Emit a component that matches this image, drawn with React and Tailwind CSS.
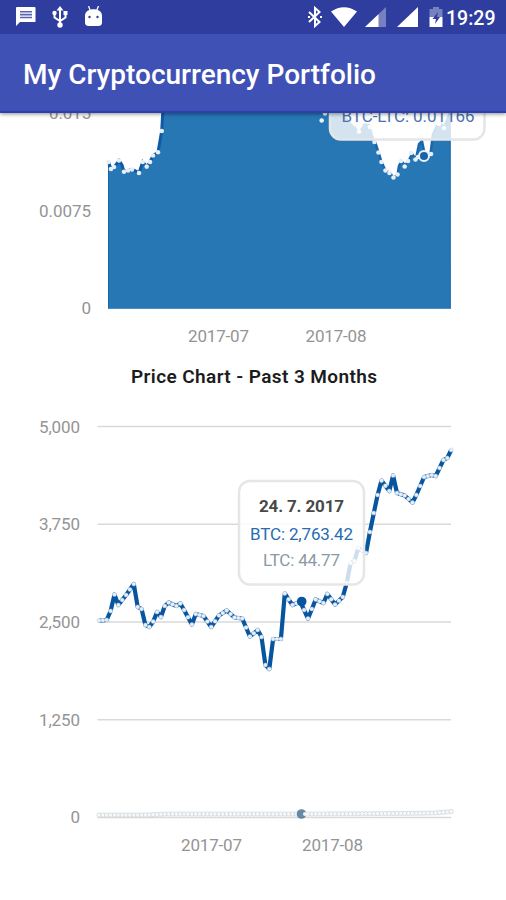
import React from "react";

const DAY = 3.87;
const START = 99;

// Known turning points of the BTC price, in chart units.
const BTC = [
  [99, 620.5], [105, 620], [109, 611], [113.3, 594.5], [118.3, 605], [125.7, 595], [132, 584], [136.7, 607], [141, 609],
  [145, 625], [148.5, 627], [153, 621.5], [156.7, 612], [162.5, 617], [166, 606], [170, 602.5], [174.5, 606], [178.7, 603.5],
  [184, 610], [191, 624.5], [197.5, 614], [202.7, 616], [209.5, 627], [217.5, 615.5], [226.7, 610.5], [234, 617.5], [242, 618.5],
  [248.3, 636.5], [256, 630], [261, 637], [266, 665], [269.3, 669], [275, 639], [282, 639], [286, 593.5], [290.7, 605],
  [294, 595], [301.7, 601.5], [308, 618.5], [316.7, 599.5], [323.5, 603], [328.7, 594], [336, 604.5], [342.5, 597],
  [346.5, 583], [349.5, 563], [353, 561], [358.3, 548], [366.7, 553], [371, 532], [375, 513], [379, 495], [383.3, 480.6],
  [387.7, 491], [392.7, 475.5], [398.3, 493], [404, 495.5], [410.7, 502.5], [418, 495], [424.5, 477], [430, 475], [436.7, 476],
  [442.3, 460], [446, 458], [450, 450],
];

function sample(points, x) {
  for (let i = 1; i < points.length; i++) {
    const [x0, y0] = points[i - 1];
    const [x1, y1] = points[i];
    if (x <= x1) return y0 + ((y1 - y0) * (x - x0)) / (x1 - x0);
  }
  return points[points.length - 1][1];
}

// One marker a day; turning points are snapped to the closest day.
const SNAPPED = BTC.map(([x, y]) => [START + Math.round((x - START) / DAY) * DAY, y]).filter(
  ([x], i, all) => i === 0 || x > all[i - 1][0] + 1
);
const PRICE = Array.from({ length: 92 }, (_, i) => [START + i * DAY, sample(SNAPPED, START + i * DAY)]);

const LTC = Array.from({ length: 92 }, (_, i) => {
  const x = START + i * DAY;
  return [x, sample([[99, 815], [145, 815], [165, 814], [300, 814], [400, 813.5], [435, 813], [452, 811.5]], x)];
});

const LEFT = [
  [108.5, 162], [111, 169], [114, 167], [117, 163.5], [119, 160.5], [122, 165], [124, 171.7], [128, 170.5], [132, 169.5],
  [135, 170.5], [139, 173], [142.7, 162], [146.7, 166.6], [150, 162], [153, 155.5], [158, 152.3], [161.7, 131], [163, 108],
];
const RIGHT = [
  [317, 108], [343, 112], [351, 123], [355, 126], [359, 131], [364, 123], [370, 124], [374.5, 140], [378.5, 152.5], [381.5, 162],
  [385.5, 170.5], [390, 173], [393.5, 177.5], [397.5, 175], [399, 166], [401.5, 161], [405, 165.5], [408.5, 161], [412, 154],
  [416, 159], [419, 144], [422, 141], [425, 156], [428, 155], [430.5, 154], [433, 134], [437, 126], [441, 124], [444, 127.5], [447, 121], [450, 112],
];
const LEFT_DOTS = [0, 1, 2, 4, 6, 7, 8, 10, 11, 12, 13, 14, 15, 16].map((i) => LEFT[i]);
const RIGHT_DOTS = [
  [321.7, 120.5], [325, 113.5], [355, 124], [359, 131.5], [370, 127], [374.5, 142], [378.5, 152.5], [381.5, 162], [385.5, 170.5],
  [389.5, 173], [393.5, 177.5], [397.5, 174.5], [401, 161], [404.7, 166.5], [408, 161], [411, 153], [415.5, 159.5],
  [418, 157], [431, 154], [439, 124], [444, 128],
];

const toPoints = (list) => list.map(([x, y]) => `${x.toFixed(1)},${y.toFixed(1)}`).join(" ");

function Label({ x, y, w, anchor = "end", className = "fill-[#949494]", children }) {
  return (
    <text x={x} y={y} textAnchor={anchor} textLength={w} className={`text-[17px] ${className}`}>
      {children}
    </text>
  );
}

function StatusBar() {
  return (
    <div className="flex h-[34px] items-center bg-[#2f3e9e] pl-4 pr-[10px] text-white">
      <svg className="h-5 w-5" viewBox="0 0 20 20" fill="currentColor">
        <path d="M1 0h17.500a1 1 0 0 1 1 1v14H4L0 19V1a1 1 0 0 1 1-1Z" />
        <path d="M4 4.700h12M4 7.600h12M4 10.500h12" stroke="#5965b2" strokeWidth="1.600" />
      </svg>
      <svg className="ml-[15px] h-[22px] w-[18px]" viewBox="0 0 18 22" fill="none" stroke="currentColor" strokeWidth="2">
        <path d="M9 19V3M3.500 8v3.500L9 15l5.500-3.500V8" />
        <path d="M9 0l3.500 4.500h-7zM12.500 5h4v4h-4z" fill="currentColor" stroke="none" />
        <circle cx="3.500" cy="7" r="2.200" fill="currentColor" stroke="none" />
        <circle cx="9" cy="19" r="2.700" fill="currentColor" stroke="none" />
      </svg>
      <svg className="ml-[15px] h-[22px] w-[19px]" viewBox="0 0 19 22" fill="currentColor">
        <path d="M4.500 0l2 5M14.500 0l-2 5" stroke="currentColor" strokeWidth="1.300" />
        <path d="M1 9.500c0-8.500 17-8.500 17 0v7q0 3.500-4 3.500H5q-4 0-4-3.500Z" />
        <circle cx="5.500" cy="11" r="1.200" fill="#2f3e9e" />
        <circle cx="13.500" cy="11" r="1.200" fill="#2f3e9e" />
      </svg>
      <div className="ml-auto flex items-center">
        <svg className="h-[22px] w-4" viewBox="0 0 16 22" fill="none" stroke="currentColor" strokeWidth="2">
          <path d="M2 6l10.500 10L8 20V2l4.500 4L2 16" />
          <path d="M1 11h2M13 11h2" />
        </svg>
        <svg className="ml-2 h-5 w-[26px]" viewBox="0 0 26 20" fill="currentColor">
          <path d="M0 4.500Q13-4 26 4.500L13 20Z" />
        </svg>
        <svg className="ml-2 h-5 w-[21px]" viewBox="0 0 21 20" fill="currentColor">
          <path d="M0 20L21 0v20Z" opacity=".35" />
          <path d="M0 20L13.500 7.200V20Z" />
        </svg>
        <svg className="ml-[11px] h-5 w-[21px]" viewBox="0 0 21 20" fill="currentColor">
          <path d="M0 20L21 0v20Z" />
        </svg>
        <svg className="ml-[11px] h-5 w-[14px]" viewBox="0 0 14 20" fill="currentColor">
          <path d="M4 0h6v2h3.500v8H.5V2H4z" opacity=".35" />
          <path d="M.5 10h13v10H.5z" />
          <path d="M9 5L3.500 12H7l-1 5 5-7H8z" fill="#2f3e9e" />
        </svg>
        <span className="ml-[3px] mt-[3px] w-[50px] whitespace-nowrap text-[19.500px] font-medium leading-none">19:29</span>
      </div>
    </div>
  );
}

function ShareChart() {
  const area = `${toPoints([[108.5, 308.5], ...LEFT])} ${toPoints([...RIGHT, [450.5, 308.5]])}`;
  return (
    <svg className="block" width="506" height="247" viewBox="0 113 506 247">
      <Label x={91} y={119} w={42}>0.015</Label>
      <Label x={91} y={217} w={52}>0.0075</Label>
      <Label x={91} y={314}>0</Label>
      <polygon points={area} fill="#2777b5" />
      <path d="M108.500 163V308.500M450.300 113V308.500" stroke="#1767ad" strokeWidth="1" />
      <path d="M108 308.500H451" stroke="#4c8fc4" strokeWidth="1" />
      <polyline points={toPoints(LEFT)} fill="none" stroke="#0e5aa5" strokeWidth="3" />
      <polyline points={toPoints(RIGHT.slice(7))} fill="none" stroke="#1b67ab" strokeWidth="2.500" />
      {[...LEFT_DOTS, ...RIGHT_DOTS].map(([x, y], i) => (
        <circle key={i} cx={x} cy={y} r="2.300" fill="#e4eff8" />
      ))}
      <circle cx="424" cy="156" r="5" fill="#1a63a9" stroke="#eaf3fa" strokeWidth="2" />
      <rect x="330" y="80" width="154.500" height="59.500" rx="11" fill="#fff" fillOpacity=".8" stroke="#e4e5e7" strokeWidth="2.500" />
      <Label x={408} y={121.500} w={133} anchor="middle" className="fill-[#4a74ad]">BTC-LTC: 0.01166</Label>
      <Label x={218.500} y={342} w={61} anchor="middle">2017-07</Label>
      <Label x={336} y={342} w={61} anchor="middle">2017-08</Label>
    </svg>
  );
}

function PriceChart() {
  return (
    <svg className="block" width="506" height="508" viewBox="0 392 506 508">
      <path d="M97.500 426.500H451M97.500 524.200H451M97.500 622H451M97.500 719.800H451M97.500 817.500H451" stroke="#d9d9d9" strokeWidth="1.500" />
      <Label x={80} y={433} w={41}>5,000</Label>
      <Label x={80} y={530} w={41}>3,750</Label>
      <Label x={80} y={628} w={41}>2,500</Label>
      <Label x={80} y={726} w={41}>1,250</Label>
      <Label x={80} y={823}>0</Label>
      <polyline points={toPoints(PRICE)} fill="none" stroke="#07549f" strokeWidth="4.200" strokeLinejoin="round" />
      {PRICE.map(([x, y], i) => (
        <circle key={i} cx={x} cy={y} r="2.100" fill="#e6eff8" stroke="#a9c4e1" strokeWidth=".4" />
      ))}
      <circle cx="301.700" cy="601.500" r="4.800" fill="#07549f" />
      <polyline points={toPoints(LTC)} fill="none" stroke="#e9edef" strokeWidth="4" />
      {LTC.map(([x, y], i) => (
        <circle key={i} cx={x} cy={y} r="2.200" fill="#f6f8f9" stroke="#c6cfd3" strokeWidth=".6" />
      ))}
      <circle cx="301.500" cy="814" r="4.800" fill="#6588a5" />
      <circle cx="305" cy="814" r="2" fill="#f4f7f8" />
      <rect x="239" y="481" width="125" height="103.500" rx="11" fill="#fff" fillOpacity=".8" stroke="#e6e6e6" strokeWidth="2.500" />
      <Label x={301.500} y={512} w={85} anchor="middle" className="fill-[#484848] font-bold">24. 7. 2017</Label>
      <Label x={301.500} y={540} w={103} anchor="middle" className="fill-[#276bb0]">BTC: 2,763.42</Label>
      <Label x={301.500} y={566} w={77} anchor="middle" className="fill-[#8a99a3]">LTC: 44.77</Label>
      <Label x={211.500} y={851} w={61} anchor="middle">2017-07</Label>
      <Label x={332.500} y={851} w={61} anchor="middle">2017-08</Label>
    </svg>
  );
}

export default function App() {
  return (
    <div className="flex h-[900px] w-[506px] flex-col overflow-hidden bg-white font-['Roboto',sans-serif]">
      <header className="relative z-10 shrink-0 shadow-[0_1px_4px_rgba(0,0,0,0.45)]">
        <StatusBar />
        <div className="flex h-[79px] items-center border-b-2 border-[#2c3fb0] bg-[#4051b5] pl-[23px] pt-[5px]">
          <h1 className="whitespace-nowrap text-[28px] font-medium leading-none text-white">My Cryptocurrency Portfolio</h1>
        </div>
      </header>
      <main className="flex flex-col">
        <ShareChart />
        <h2 className="h-8 pl-[131px] text-[19px] font-semibold leading-[33px] tracking-[0.4px] text-[#1c1c1c]">
          Price Chart - Past 3 Months
        </h2>
        <PriceChart />
      </main>
    </div>
  );
}
